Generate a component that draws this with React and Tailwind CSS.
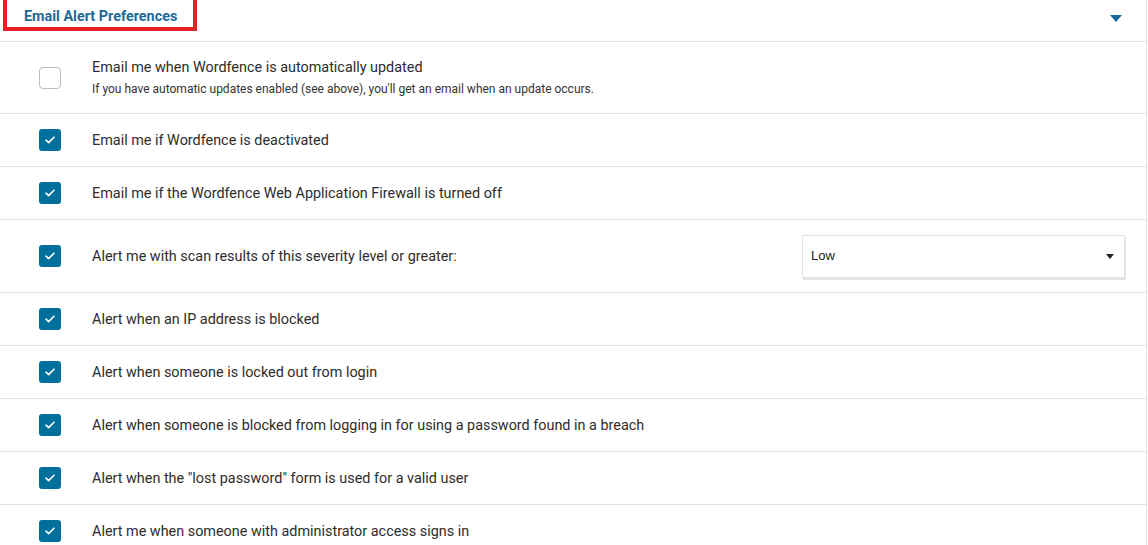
const OPTIONS = [
  { label: 'Email me if Wordfence is deactivated', checked: true },
  { label: 'Email me if the Wordfence Web Application Firewall is turned off', checked: true },
  { label: 'Alert me with scan results of this severity level or greater:', checked: true, select: 'Low' },
  { label: 'Alert when an IP address is blocked', checked: true },
  { label: 'Alert when someone is locked out from login', checked: true },
  { label: 'Alert when someone is blocked from logging in for using a password found in a breach', checked: true },
  { label: 'Alert when the "lost password" form is used for a valid user', checked: true },
  { label: 'Alert me when someone with administrator access signs in', checked: true },
];

function Checkbox({ checked }) {
  if (!checked) {
    return <div className="h-[22px] w-[22px] shrink-0 rounded-[4px] border border-[#bdbdbd] bg-white" />;
  }
  return (
    <div className="flex h-[22px] w-[22px] shrink-0 items-center justify-center rounded-[3px] bg-[#006f9c]">
      <svg width="10" height="8" viewBox="0 0 10 8" fill="none">
        <path d="M1 4.2 3.6 6.6 9 1.2" stroke="#fff" strokeWidth="1.6" strokeLinecap="round" strokeLinejoin="round" />
      </svg>
    </div>
  );
}

export default function App() {
  return (
    <div className="min-h-screen bg-white font-['Roboto',sans-serif] text-[#2d2d2d]">
      <div className="w-[1147px] border-r border-[#e4e4e4]">
        <div className="flex h-[42px] items-start justify-between border-b border-[#e2e2e2]">
          <div className="ml-[3px] flex h-[31px] w-[194px] items-center border-[4px] border-t-0 border-[#e8202a] pl-[17px] pt-[7px]">
            <span className="text-[14.4px] font-bold text-[#1d6a98]">Email Alert Preferences</span>
          </div>
          <svg className="mr-[24px] mt-[15px]" width="12" height="7" viewBox="0 0 12 7">
            <path d="M0 0h12L6 7z" fill="#136b99" />
          </svg>
        </div>

        <div className="flex h-[72px] items-center border-b border-[#e2e2e2] pl-[39px]">
          <Checkbox checked={false} />
          <div className="ml-[31px]">
            <div className="text-[14.4px] leading-[20px]">Email me when Wordfence is automatically updated</div>
            <div className="mt-[2px] text-[12px] leading-[18px] text-[#333]">
              If you have automatic updates enabled (see above), you'll get an email when an update occurs.
            </div>
          </div>
        </div>

        {OPTIONS.map((o) => (
          <div
            key={o.label}
            className={`flex items-center border-b border-[#e2e2e2] pl-[39px] ${o.select ? 'h-[73px] pr-[21px]' : 'h-[53px]'}`}
          >
            <Checkbox checked={o.checked} />
            <div className="ml-[31px] flex-1 pt-[2px] text-[14.4px] leading-[20px]">{o.label}</div>
            {o.select && (
              <div className="flex h-[43px] w-[323px] items-center justify-between border border-[#e2e2e2] pl-[8px] pr-[10px] font-['Liberation_Sans',sans-serif] text-[13px] text-[#222] shadow-[1px_2px_0_#e4e4e4]">
                <span>{o.select}</span>
                <svg width="8" height="5" viewBox="0 0 8 5">
                  <path d="M0 0h8L4 5z" fill="#222" />
                </svg>
              </div>
            )}
          </div>
        ))}
      </div>
    </div>
  );
}
